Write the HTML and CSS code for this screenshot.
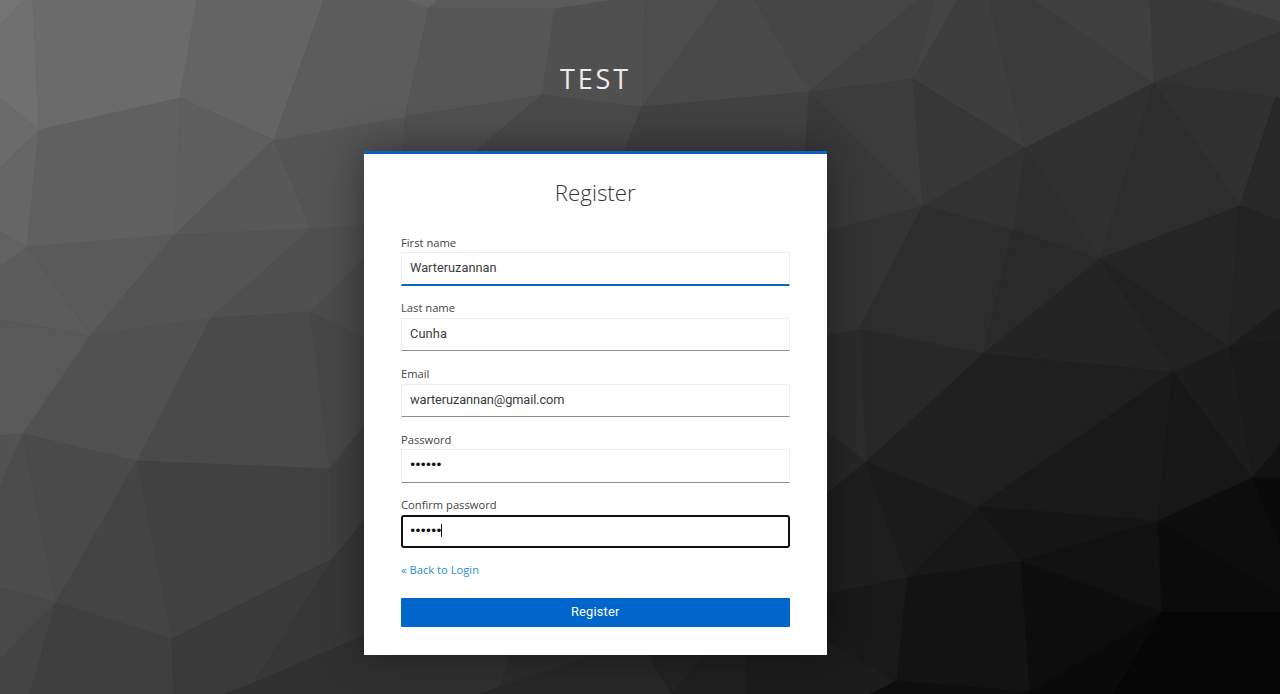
FILE: index.html
```html
<!DOCTYPE html>
<html lang="en">
<head>
<meta charset="utf-8">
<title>Register</title>
<link rel="stylesheet" href="styles.css">
</head>
<body>
<svg class="backdrop" id="backdrop" viewBox="0 0 1280 694" preserveAspectRatio="none" aria-hidden="true"></svg>
<div class="page">
  <header class="brand">TEST</header>
  <main class="card">
    <h1 class="title">Register</h1>
    <form class="form">
      <div class="group"><label class="label">First name</label><div class="field field-active"><span class="v-first">Warteruzannan</span></div></div>
      <div class="group"><label class="label">Last name</label><div class="field"><span class="v-last">Cunha</span></div></div>
      <div class="group"><label class="label">Email</label><div class="field"><span class="v-mail">warteruzannan@gmail.com</span></div></div>
      <div class="group"><label class="label">Password</label><div class="field"><span class="dots">••••••</span></div></div>
      <div class="group"><label class="label">Confirm password</label><div class="field field-focus"><span class="dots">••••••</span><i class="caret"></i></div></div>
      <a class="back">« Back to Login</a>
      <button class="submit" type="button">Register</button>
    </form>
  </main>
</div>
<script src="backdrop.js"></script>
</body>
</html>
```
FILE: styles.css
```css
* { box-sizing: border-box; }
body {
  margin: 0;
  height: 694px;
  overflow: hidden;
  background: #333;
  font-family: "Open Sans", "Noto Sans", sans-serif;
}
.backdrop {
  position: absolute;
  inset: 0;
  width: 1280px;
  height: 694px;
}
.page {
  position: relative;
  display: flex;
  flex-direction: column;
  width: 463px;
  margin-left: 364px;
}
.brand {
  height: 151px;
  padding-top: 60px;
  line-height: 37px;
  font-size: 27px;
  letter-spacing: 2.8px;
  text-align: center;
  color: #ededed;
}
.card {
  height: 504px;
  padding: 0 37.5px 0 37px;
  background: #fff;
  border-top: 3px solid #0b62c4;
  box-shadow: 0 0 38px rgba(3, 3, 3, .42);
}
.title {
  margin: 0;
  padding-top: 23px;
  height: 80.6px;
  line-height: 32px;
  font-size: 22.3px;
  font-weight: 300;
  text-align: center;
  color: #363636;
}
.form { display: flex; flex-direction: column; }
.group { height: 65.7px; }
.label {
  display: block;
  height: 17.6px;
  line-height: 15.6px;
  font-size: 11.2px;
  color: #444;
}
.field {
  display: flex;
  align-items: center;
  height: 33.6px;
  padding: 0 8px 2.6px;
  border: 1px solid #ededed;
  border-bottom-color: #8a8d90;
  font-family: Roboto, sans-serif;
  font-size: 12.8px;
  color: #3c3c3c;
}
.field-active { border-bottom: 2px solid #0b66c2; padding-bottom: 1.6px; }
.field-focus {
  height: 33px;
  border: 2px solid #111;
  border-radius: 3px;
  padding: 0 7px 2px;
}
.v-first { letter-spacing: 0; }
.v-last { letter-spacing: .1px; }
.v-mail { letter-spacing: -.1px; }
.dots {
  margin-left: -1px;
  font-family: "DejaVu Sans", sans-serif;
  font-size: 12.5px;
  letter-spacing: -2.1px;
  color: #111;
}
.caret { width: 1px; height: 13px; background: #111; }
.back {
  height: 16px;
  line-height: 14px;
  font-size: 11.2px;
  color: #2a8fce;
}
.submit {
  height: 28.5px;
  margin-top: 19.2px;
  padding: 0 0 2px;
  border: 0;
  border-radius: 1px;
  background: #06c;
  color: #fff;
  font-family: Roboto, sans-serif;
  font-size: 12.8px;
  letter-spacing: .2px;
}
```
FILE: backdrop.js
```js
// Low-poly backdrop: each facet is [fill, points].
const facets = [
  ["#747474", "0,0 24,0 0,26"],
  ["#707070", "24,0 33,0 39,130 0,98 0,26"],
  ["#6b6b6b", "33,0 197,0 180,98 39,130"],
  ["#646464", "197,0 324,0 274,140 180,98"],
  ["#6b6b6b", "0,98 39,130 0,168"],
  ["#666666", "0,168 39,130 27,247 0,232"],
  ["#626262", "0,232 27,247 0,267"],
  ["#606060", "39,130 180,98 175,235 27,247"],
  ["#5e5e5e", "180,98 274,140 175,235"],
  ["#585858", "274,140 311,229 175,235"],
  ["#545454", "274,140 405,117 400,230 311,229"],
  ["#5c5c5c", "324,0 408,0 429,8 405,117 274,140"],
  ["#646464", "408,0 437,0 429,8"],
  ["#5b5b5b", "437,0 615,0 555,9 429,8"],
  ["#565656", "429,8 555,9 542,95 405,117"],
  ["#505050", "405,117 542,95 477,150 400,230"],
  ["#5c5c5c", "0,267 27,247 91,335 0,320"],
  ["#5a5a5a", "27,247 175,235 91,335"],
  ["#595959", "0,320 91,335 23,434 0,436"],
  ["#545454", "175,235 311,229 211,318 91,335"],
  ["#515151", "91,335 211,318 137,461 23,434"],
  ["#505050", "311,229 400,222 310,312 211,318"],
  ["#4b4b4b", "400,222 400,355 310,312"],
  ["#4a4a4a", "211,318 310,312 330,469 137,461"],
  ["#474747", "310,312 400,355 400,380 330,469"],
  ["#3f3f3f", "330,469 400,380 400,475 333,559"],
  ["#525252", "0,436 23,434 0,487"],
  ["#4c4c4c", "0,487 23,434 56,603 0,588"],
  ["#4a4a4a", "23,434 137,461 56,603"],
  ["#414141", "137,461 330,469 333,559 172,639"],
  ["#444444", "137,461 172,639 56,603"],
  ["#484848", "0,588 56,603 0,660"],
  ["#444444", "0,660 56,603 30,694 0,694"],
  ["#3f3f3f", "56,603 172,639 174,694 30,694"],
  ["#3a3a3a", "172,639 333,559 254,683 225,694 174,694"],
  ["#373737", "333,559 400,475 400,620 254,683"],
  ["#303030", "254,683 400,620 515,640 500,687 480,694 225,694"],
  ["#2c2c2c", "515,640 640,640 500,687"],
  ["#282828", "500,687 640,640 672,694 480,694"],
  ["#232323", "640,640 720,635 672,694"],
  ["#202020", "720,635 748,635 746,694 672,694"],
  ["#1c1c1c", "748,635 827,635 896,681 870,694 746,694"],
  ["#505050", "555,9 615,0 645,0 642,107 542,95"],
  ["#4d4d4d", "645,0 720,0 642,107"],
  ["#494949", "720,0 755,0 809,92 642,107"],
  ["#464646", "755,0 918,0 809,92"],
  ["#494949", "542,95 642,107 625,152 625,170 470,170 477,150"],
  ["#414141", "642,107 809,92 816,170 617,170"],
  ["#414141", "918,0 935,0 913,79 809,92"],
  ["#444444", "935,0 958,0 913,79"],
  ["#3e3e3e", "958,0 989,0 1025,148 913,79"],
  ["#3b3b3b", "989,0 1034,0 1154,83 1025,148"],
  ["#3f3f3f", "1034,0 1150,0 1154,83"],
  ["#393939", "1150,0 1210,0 1280,21 1280,32 1154,83"],
  ["#414141", "1210,0 1280,0 1280,21"],
  ["#333333", "1154,83 1280,32 1280,98 1276,97"],
  ["#303030", "1154,83 1276,97 1240,206"],
  ["#3c3c3c", "809,92 913,79 923,206"],
  ["#373737", "913,79 1025,148 923,206"],
  ["#393939", "809,92 923,206 800,238"],
  ["#303030", "1025,148 1154,83 1100,259"],
  ["#2d2d2d", "1154,83 1240,206 1100,259"],
  ["#2e2e2e", "1025,148 1100,259 1013,230"],
  ["#323232", "923,206 1025,148 1013,230"],
  ["#282828", "1276,97 1280,98 1280,221 1240,206"],
  ["#333333", "923,206 859,329 800,342 800,238"],
  ["#2d2d2d", "923,206 1013,230 983,354 859,329"],
  ["#2a2a2a", "1013,230 1100,259 983,354"],
  ["#252525", "1100,259 1240,206 1229,347"],
  ["#232323", "1240,206 1280,221 1280,308 1229,347"],
  ["#212121", "1100,259 1229,347 1173,372"],
  ["#242424", "1100,259 1173,372 983,354"],
  ["#1c1c1c", "1229,347 1280,308 1280,340"],
  ["#191919", "1229,347 1280,340 1280,445 1252,478"],
  ["#1c1c1c", "1229,347 1252,478 1173,372"],
  ["#282828", "859,329 983,354 866,462"],
  ["#2c2c2c", "800,342 859,329 866,462 800,410"],
  ["#262626", "800,410 866,462 800,515"],
  ["#202020", "983,354 978,507 866,462"],
  ["#1f1f1f", "983,354 1173,372 978,507"],
  ["#191919", "1173,372 1158,521 978,507"],
  ["#171717", "1173,372 1252,478 1158,521"],
  ["#121212", "1252,478 1280,445 1280,478"],
  ["#1e1e1e", "800,515 866,462 907,578 800,599"],
  ["#1b1b1b", "866,462 978,507 907,578"],
  ["#181818", "978,507 1021,561 907,578"],
  ["#151515", "978,507 1158,521 1021,561"],
  ["#111111", "1158,521 1162,612 1021,561"],
  ["#0d0d0d", "1158,521 1252,478 1280,545 1280,594"],
  ["#0a0a0a", "1252,478 1280,478 1280,545"],
  ["#0b0b0b", "1158,521 1280,594 1280,612 1162,612"],
  ["#131313", "907,578 1021,561 1030,692 896,681"],
  ["#0d0d0d", "1021,561 1162,612 1030,692"],
  ["#191919", "800,599 907,578 896,681 827,640 800,640"],
  ["#0e0e0e", "896,681 1030,692 1030,694 870,694"],
  ["#0a0a0a", "1030,692 1162,612 1114,694 1030,694"],
  ["#060606", "1162,612 1280,612 1280,694 1114,694"]
];

const svg = document.getElementById("backdrop");
for (const [fill, points] of facets) {
  const p = document.createElementNS("http://www.w3.org/2000/svg", "polygon");
  p.setAttribute("points", points);
  p.setAttribute("fill", fill);
  p.setAttribute("stroke", fill);
  p.setAttribute("stroke-width", "0.7");
  svg.appendChild(p);
}
```
